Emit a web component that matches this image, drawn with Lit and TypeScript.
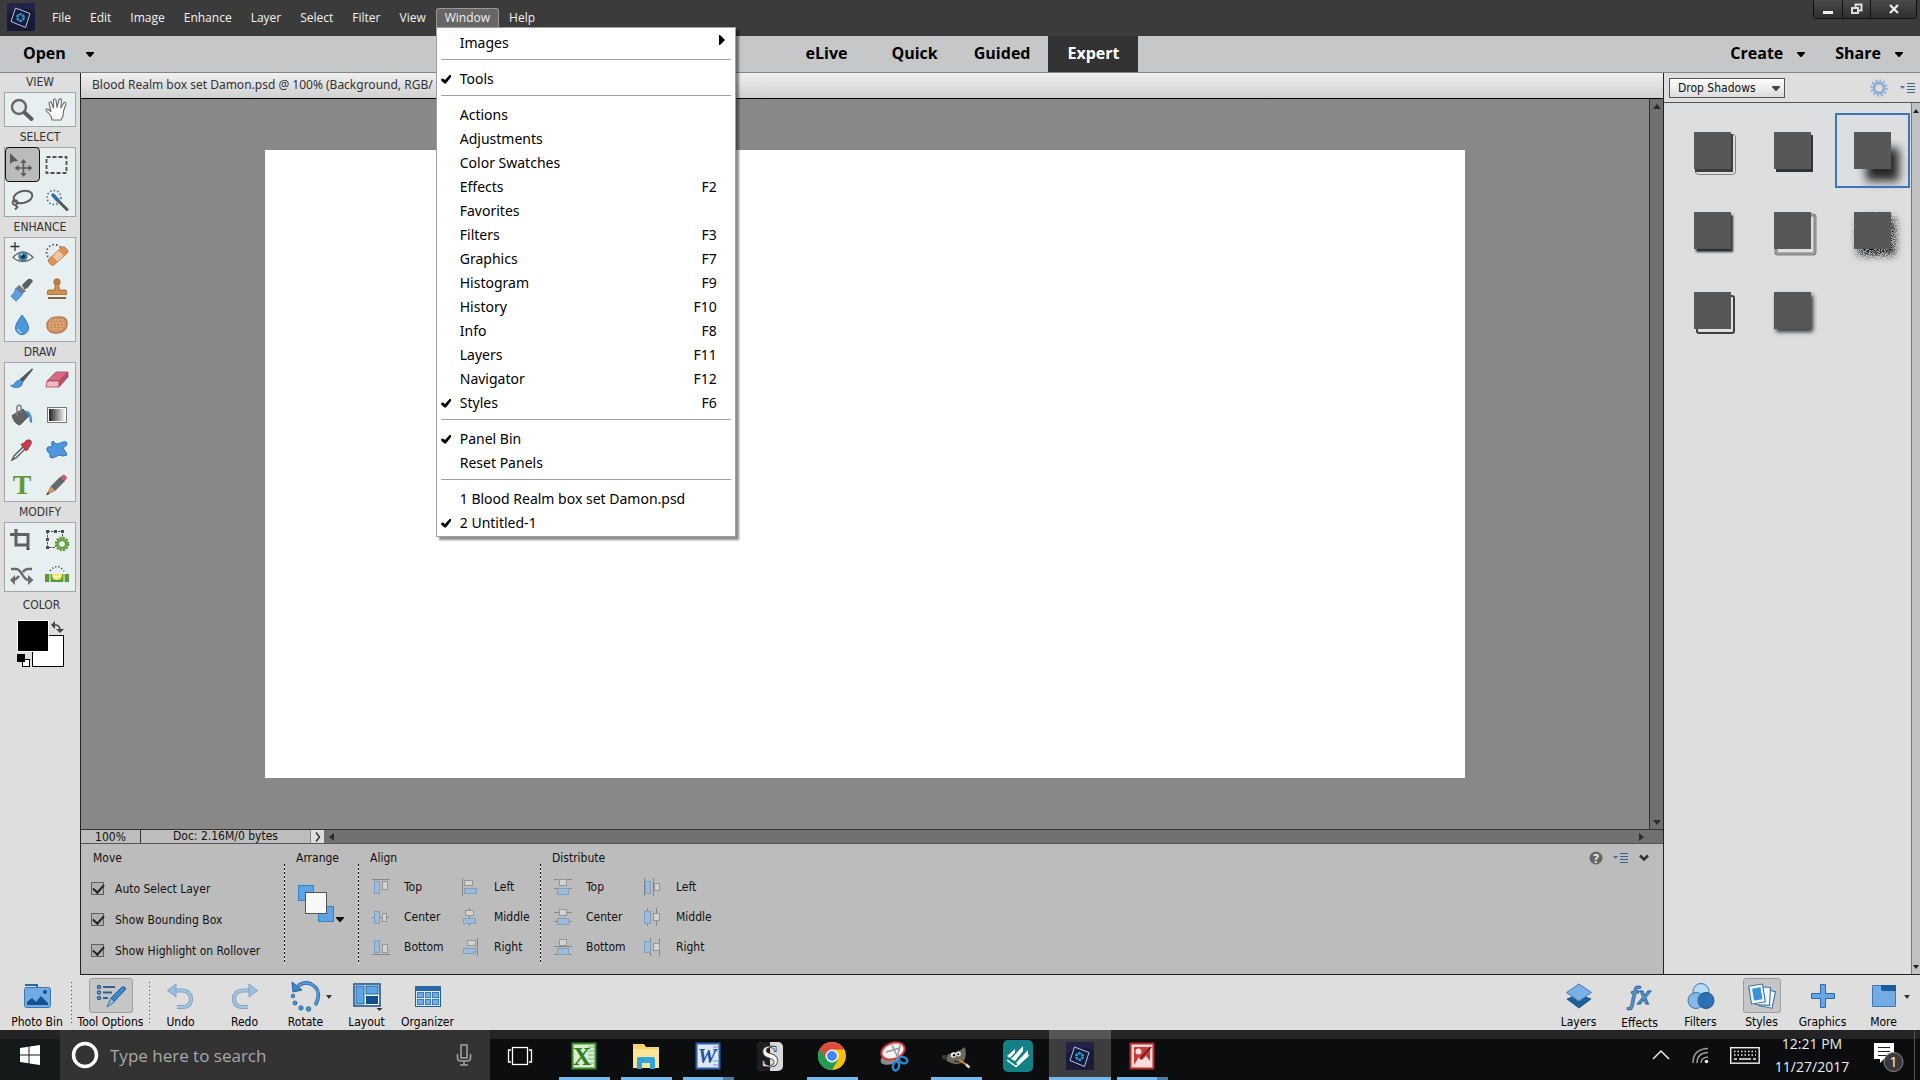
import { LitElement, html, css, svg, nothing, TemplateResult } from "lit";
import { customElement } from "lit/decorators.js";
import { classMap } from "lit/directives/class-map.js";

const icon = (w: number, h: number, body: unknown) =>
  html`<svg class="ico" width=${w} height=${h} viewBox="0 0 ${w} ${h}" aria-hidden="true">${body}</svg>`;

const caret = html`<svg class="ico" width="8" height="5" viewBox="0 0 8 5" aria-hidden="true"><path d="M0 0H8V1L4.500 5H3.500L0 1Z" fill="currentColor" /></svg>`;

const panelMenuIcon = icon(16, 12, svg`
  <path d="M0 4H5L2.500 7Z" fill="#4273a8"/>
  <path d="M7 1.500H15M7 4.500H15M7 7.500H15M7 10.500H15" stroke="#3f628c" stroke-width="1"/>`);

const check = html`<svg class="ico" width="10" height="9" viewBox="0 0 10 9" aria-hidden="true"><path d="M0 4L2 3.500L4 5L8.500 0H10V2L5 8.500H3.500L0.500 6Z" fill="#000" /></svg>`;

/* Application emblem: tilted frame with an aperture ring */
const emblem = (s: number) => html`<svg class="ico" width=${s} height=${s} viewBox="0 0 28 28" aria-hidden="true">
  <rect width="28" height="28" fill="#191a38" />
  <path d="M0 0H28V8Q14 2 0 12Z" fill="#22234a" />
  <path d="M8.500 5L23 10.500L18.500 24.500L4 18.500Z" fill="none" stroke="#a9cfe0" stroke-width="1" />
  <circle cx="13.500" cy="14.500" r="3.200" fill="none" stroke="#2d9fd8" stroke-width="2.400" stroke-dasharray="2.500 0.850" />
</svg>`;

/* ---------- Toolbox ---------- */
const tools: Record<string, TemplateResult> = {
  zoom: icon(26, 26, svg`<circle cx="10" cy="10" r="7" fill="#e3e8ea" stroke="#666a6c" stroke-width="2.500"/><path d="M15.500 15.500L22.500 22" stroke="#5a5d60" stroke-width="4" stroke-linecap="round"/>`),
  hand: icon(26, 26, svg`<path d="M8 23L7 19L2.500 14Q1.500 12 3.500 12L7 14.500L5 6.500Q5 4.500 7 5L9.500 11L9.500 3Q10.500 1 12 3L13 10.500L15 2.500Q17 1 17.500 3L16.800 11L20 5.500Q22 5 22 7L19.500 14L19 19L17 23Z" fill="#fafafa" stroke="#6b6b6b" stroke-width="1.100" stroke-linejoin="round"/>`),
  move: icon(26, 26, svg`<path d="M1 1V12L4 9.500L9 9Z" fill="#5a5a5a"/><g stroke="#5a5a5a" stroke-width="1.600" fill="#5a5a5a"><path d="M14.500 9.500V22.500M8 16H21"/><path stroke="none" d="M14.500 7L17.500 11H11.500ZM14.500 25L17.500 21H11.500ZM5.500 16L9.500 13V19ZM23.500 16L19.500 13V19Z"/></g>`),
  marquee: icon(26, 26, svg`<rect x="2.500" y="5" width="20" height="16" fill="none" stroke="#505050" stroke-width="1.800" stroke-dasharray="4 2"/>`),
  lasso: icon(26, 26, svg`<ellipse cx="14" cy="10" rx="9.500" ry="6" transform="rotate(-14 14 10)" fill="none" stroke="#5c5f61" stroke-width="2"/><circle cx="6" cy="15.500" r="2.300" fill="none" stroke="#5c5f61" stroke-width="1.800"/><path d="M6 18L8.500 20L6 22.500" fill="none" stroke="#5c5f61" stroke-width="1.800"/>`),
  quick: icon(26, 26, svg`<circle cx="10" cy="10.500" r="7" fill="none" stroke="#666" stroke-width="1.600" stroke-dasharray="1.500 2.100"/><path d="M12 11.500L23 22.500" stroke="#55585a" stroke-width="3" stroke-linecap="round"/><path d="M9 8L14 13.500" stroke="#2c6fad" stroke-width="3.500" stroke-linecap="round"/>`),
  eye: icon(26, 26, svg`<path d="M6 0V9M1.500 4.500H10.500" stroke="#333" stroke-width="1.300"/><path d="M4 15.500Q14 4.500 24 15.500Q14 23.500 4 15.500Z" fill="#fff" stroke="#6e7173" stroke-width="1.500"/><circle cx="14" cy="14.500" r="4.800" fill="#3e83a8"/><circle cx="14" cy="14.500" r="2.200" fill="#12303f"/><circle cx="12.500" cy="12.500" r="1" fill="#fff"/>`),
  heal: icon(26, 26, svg`<path d="M4 15A7 7 0 1 1 17 6" fill="none" stroke="#555" stroke-width="1.800" stroke-dasharray="1.500 2.200"/><g transform="rotate(-42 14 14)"><rect x="3" y="10" width="22" height="8" rx="2.500" fill="#dc9455" stroke="#b8743a" stroke-width="0.800"/><rect x="10" y="10.400" width="8" height="7.200" fill="#f3d3ad"/><path d="M12 12.500H13M15 12.500H16M12 15.500H13M15 15.500H16" stroke="#a8662f"/></g>`),
  smart: icon(26, 26, svg`<path d="M13 8L18 3Q20 1 22 2L24 4Q21 8 18.500 11L15.500 12.500Z" fill="#5b5e60"/><path d="M10 8L17 14L13 17L7 11Z" fill="#777b7e"/><path d="M7 11L13.500 17Q10 22 7 24Q4 22 2 19Q6 16 7 11Z" fill="#5b9fe0" stroke="#3277bb" stroke-width="0.800"/>`),
  stamp: icon(26, 26, svg`<circle cx="13" cy="5" r="3.200" fill="#bf8142" stroke="#99602c" stroke-width="0.800"/><path d="M11.500 7H14.500L15.500 13H21.500Q22.500 13 22.500 14.500V17.500H3.500V14.500Q3.500 13 4.500 13H10.500Z" fill="#cf9150" stroke="#99602c" stroke-width="0.800"/><path d="M4 21H22" stroke="#7d512a" stroke-width="1.800"/>`),
  blur: icon(26, 26, svg`<path d="M13 3Q19.500 11.500 19.500 16A6.500 6.500 0 0 1 6.500 16Q6.500 11.500 13 3Z" fill="#4f97dc" stroke="#3178be"/><path d="M9 17A4 4 0 0 0 13 20.500" stroke="#a7d0f5" fill="none" stroke-width="1.500"/>`),
  sponge: icon(26, 26, svg`<path d="M3 11Q5 5 13 5Q22 4 23 9Q24 16 20 19Q14 23 6 20Q2 17 3 11Z" fill="#cf9160" stroke="#ab6f43"/><path d="M5 11H22M5 14H22M6 17H20M7 8H20" stroke="#f2cfa6" stroke-width="1.200" stroke-dasharray="1.500 2"/>`),
  brush: icon(26, 26, svg`<path d="M23.500 2L14 14L11.500 12.500Z" fill="#55585a" stroke="#55585a" stroke-width="1.500"/><path d="M13.500 14.500Q14 20 8 20.500Q4 21 1.500 18.500Q5 18.500 6 16Q8 12 13.500 14.500Z" fill="#4f97dc" stroke="#3073b5" stroke-width="0.800"/>`),
  eraser: icon(26, 26, svg`<path d="M3 14L12 5H24L15 14Z" fill="#d56b82" stroke="#a5465c" stroke-width="0.800"/><path d="M24 5V10L15 20V14Z" fill="#b94f68" stroke="#a5465c" stroke-width="0.800"/><path d="M3 14H15V20H2Z" fill="#f4b6c2" stroke="#a5465c" stroke-width="0.800"/>`),
  bucket: icon(26, 26, svg`<path d="M3 13.500L14 7L20 14L11 23Q5 22 3 13.500Z" fill="#5f6365" stroke="#4b4e50" stroke-width="0.800"/><path d="M8 14V5Q9 2 12 4V11" fill="none" stroke="#7c7f81" stroke-width="1.500"/><path d="M15 9Q20 8 22 13Q24 19 22.500 21Q20 21 20.500 15Q19 12 15 9Z" fill="#4b8fd0"/>`),
  gradient: icon(26, 26, svg`<defs><linearGradient id="tool-gradient"><stop offset="0" stop-color="#222"/><stop offset="1" stop-color="#f6f6f6"/></linearGradient></defs><rect x="3.500" y="5.500" width="19" height="15" fill="#fff" stroke="#777"/><rect x="5" y="7" width="16" height="12" fill="url(#tool-gradient)"/>`),
  dropper: icon(26, 26, svg`<path d="M14.500 9.500L5 19L3 23L7 21L16.500 11.500" fill="#f1f3f3" stroke="#55585a" stroke-width="1.400"/><path d="M12 7.500L15 6Q18 1.500 21 3Q24 5 20.500 9.500L18.500 13L16.500 13.500Z" fill="#c43b50" stroke="#8f2637" stroke-width="0.800"/>`),
  shape: icon(26, 26, svg`<path d="M9 4Q12 8 14 7Q22 3 23 6Q24 8 19 11Q22 15 23 18Q19 20 15 18Q12 20 8 21Q5 21 6 17Q2 14 3 11Q4 9 8 10Q7 5 9 4Z" fill="#4f97dc" stroke="#3273b4"/>`),
  type: icon(30, 34, svg`<text x="15" y="26" text-anchor="middle" font-family="Liberation Serif, serif" font-weight="700" font-size="28" fill="#5f9a35">T</text>`),
  pencil: icon(26, 26, svg`<path d="M7 14.500L16.500 5L20.500 9L11 18.500Z" fill="#66696b" stroke="#4d4f51" stroke-width="0.800"/><path d="M7 14.500L11 18.500L2.500 23Z" fill="#d99a63" stroke="#9a6434" stroke-width="0.600"/><path d="M2.500 23L4 20L5.500 21.500Z" fill="#333"/><path d="M16.500 5L18.500 3Q20 2 22 4Q23.500 6 22.500 7L20.500 9Z" fill="#d3566c"/>`),
  crop: icon(26, 26, svg`<path d="M7 2V18H18M1 7.500H19V21" fill="none" stroke="#5f6264" stroke-width="3"/><rect x="17.500" y="21" width="3" height="2" fill="#444"/>`),
  recompose: icon(26, 26, svg`<path d="M3.500 4.500H18.500V10M3.500 4.500V20.500H11" fill="none" stroke="#4c4f51" stroke-dasharray="2.500 1"/><g fill="#4c4f51"><rect x="2" y="3" width="3" height="3"/><rect x="10" y="3" width="3" height="3"/><rect x="17" y="3" width="3" height="3"/><rect x="2" y="11" width="3" height="3"/><rect x="2" y="19" width="3" height="3"/></g><circle cx="18" cy="17" r="6.200" fill="none" stroke="#55852e" stroke-width="2" stroke-dasharray="2 1.250"/><circle cx="18" cy="17" r="4.300" fill="none" stroke="#6fa544" stroke-width="3"/>`),
  contentMove: icon(26, 26, svg`<path d="M2 7H7Q10 7 13 12Q16 18 20 18M2 18Q7 18 10 14M14 10Q16 7 19 7H23" fill="none" stroke="#6a6d6f" stroke-width="2.500"/><path d="M6 13V23L1 18ZM19 13V23L24.500 18Z" fill="#6a6d6f"/>`),
  straighten: icon(26, 26, svg`<path d="M6 9Q13 0 20 9" fill="none" stroke="#333" stroke-width="1.300" stroke-dasharray="1.300 2"/><rect x="1" y="12" width="24" height="8" fill="#5d983a"/><path d="M6 12V20M20 12V20" stroke="#fff"/><path d="M8 12H18V14Q18 18 13 18Q8 18 8 14Z" fill="#f4e46a"/><path d="M10 14Q13 16 16 14" stroke="#fff" fill="none" stroke-width="1.500"/>`),
};

const toolSections: { label: string; items: [string, string][] }[] = [
  { label: "VIEW", items: [["zoom", "Zoom"], ["hand", "Hand"]] },
  { label: "SELECT", items: [["move", "Move"], ["marquee", "Rectangular Marquee"], ["lasso", "Lasso"], ["quick", "Quick Selection"]] },
  { label: "ENHANCE", items: [["eye", "Red Eye Removal"], ["heal", "Spot Healing Brush"], ["smart", "Smart Brush"], ["stamp", "Clone Stamp"], ["blur", "Blur"], ["sponge", "Sponge"]] },
  { label: "DRAW", items: [["brush", "Brush"], ["eraser", "Eraser"], ["bucket", "Paint Bucket"], ["gradient", "Gradient"], ["dropper", "Color Picker"], ["shape", "Custom Shape"], ["type", "Type"], ["pencil", "Pencil"]] },
  { label: "MODIFY", items: [["crop", "Crop"], ["recompose", "Recompose"], ["contentMove", "Content-Aware Move"], ["straighten", "Straighten"]] },
];

/* ---------- Window menu ---------- */
type MenuEntry = { label: string; key?: string; on?: boolean; sub?: boolean } | null;
const windowMenu: MenuEntry[] = [
  { label: "Images", sub: true },
  null,
  { label: "Tools", on: true },
  null,
  { label: "Actions" },
  { label: "Adjustments" },
  { label: "Color Swatches" },
  { label: "Effects", key: "F2" },
  { label: "Favorites" },
  { label: "Filters", key: "F3" },
  { label: "Graphics", key: "F7" },
  { label: "Histogram", key: "F9" },
  { label: "History", key: "F10" },
  { label: "Info", key: "F8" },
  { label: "Layers", key: "F11" },
  { label: "Navigator", key: "F12" },
  { label: "Styles", key: "F6", on: true },
  null,
  { label: "Panel Bin", on: true },
  { label: "Reset Panels" },
  null,
  { label: "1 Blood Realm box set Damon.psd" },
  { label: "2 Untitled-1", on: true },
];

/* ---------- Align / distribute ---------- */
const G = "#868686";
const bigBox = (x: number, y: number, w: number, h: number) => svg`<rect x=${x + 0.5} y=${y + 0.5} width=${w - 1} height=${h - 1} fill="#9dbcd9" stroke="#7d9fc0"/>`;
const smallBox = (x: number, y: number, w: number, h: number) => svg`<rect x=${x + 0.5} y=${y + 0.5} width=${w - 1} height=${h - 1} fill="#d2d2d2" stroke="#969696"/>`;
const guide = (d: string) => svg`<path d=${d} stroke=${G} fill="none"/>`;
const s18 = (b: unknown) => icon(18, 18, b);

const alignItems: [string, TemplateResult][] = [
  ["Top", s18([guide("M0 1.500H18"), bigBox(2, 3, 6, 13), smallBox(10, 3, 6, 9)])],
  ["Left", s18([guide("M0.500 0V18"), smallBox(2, 2, 9, 6), bigBox(2, 10, 13, 6)])],
  ["Center", s18([guide("M0 9.500H17"), bigBox(2, 3, 6, 13), smallBox(10, 5, 5, 9)])],
  ["Middle", s18([guide("M7.500 0V18"), smallBox(3, 2, 9, 6), bigBox(1, 10, 13, 6)])],
  ["Bottom", s18([guide("M0 16.500H18"), bigBox(2, 2, 6, 13), smallBox(10, 6, 6, 9)])],
  ["Right", s18([guide("M15.500 0V18"), smallBox(5, 2, 9, 6), bigBox(1, 10, 13, 6)])],
];
const distItems: [string, TemplateResult][] = [
  ["Top", s18([guide("M0 1.500H18M0 10.500H18"), smallBox(5, 1, 8, 7), bigBox(3, 10, 12, 7)])],
  ["Left", s18([guide("M0.500 0V18M9.500 0V18"), bigBox(1, 3, 6, 13), smallBox(10, 5, 6, 8)])],
  ["Center", s18([guide("M0 4.500H18M0 13.500H18"), smallBox(5, 1, 8, 7), bigBox(3, 10, 12, 7)])],
  ["Middle", s18([guide("M3.500 0V18M12.500 0V18"), bigBox(0, 3, 7, 13), smallBox(9, 5, 7, 8)])],
  ["Bottom", s18([guide("M0 8.500H18M0 16.500H18"), smallBox(5, 1, 8, 7), bigBox(3, 10, 12, 7)])],
  ["Right", s18([guide("M6.500 0V18M15.500 0V18"), bigBox(0, 3, 7, 12), smallBox(9, 5, 7, 8)])],
];

/* ---------- Bottom bar ---------- */
type Action = { label: string; art: TemplateResult; on?: boolean; wide?: boolean; caret?: boolean; gap?: boolean; sep?: boolean };
const leftActions: Action[] = [
  { label: "Photo Bin", wide: true, sep: true, art: icon(32, 28, svg`<path d="M4 3H16V6" fill="none" stroke="#2f68a0" stroke-width="2"/><rect x="3.500" y="5.500" width="26" height="20" rx="2" fill="#6fabe6" stroke="#3b77b0"/><path d="M6 23V20L11 16L15 20L20 14L27 21V23Z" fill="#194f8e"/><circle cx="24" cy="10" r="2" fill="#194f8e"/>`) },
  { label: "Tool Options", wide: true, on: true, sep: true, art: icon(32, 28, svg`<g fill="none" stroke="#2e6296" stroke-width="1.500"><circle cx="4" cy="5" r="1.500"/><circle cx="4" cy="10.500" r="1.500"/><circle cx="4" cy="16" r="1.500"/><path d="M8 5H20M8 10.500H17M8 16H13" stroke-width="1.800"/></g><path d="M16 16L27 5Q29 4 30.500 6Q31 7 30 8L19 19.500Z" fill="#3d87cb" stroke="#1d5a95"/><path d="M16 16L19.500 20L12 25Z" fill="#8dbfee" stroke="#1d5a95" stroke-width="0.800"/>`) },
  { label: "Undo", gap: true, art: icon(30, 28, svg`<path d="M8 8.500H16Q25 9 25 17Q25 25 16 25H11" fill="none" stroke="#7ea3c4" stroke-width="4"/><path d="M8 8.500H16Q25 9 25 17Q25 25 16 25H11" fill="none" stroke="#a8c6e2" stroke-width="2"/><path d="M1.500 8.500L10 2V15Z" fill="#9dbfdf" stroke="#7ea3c4"/>`) },
  { label: "Redo", art: icon(30, 28, svg`<path d="M20 8.500H13Q4 9 4 17Q4 25 13 25H18" fill="none" stroke="#7ea3c4" stroke-width="4"/><path d="M20 8.500H13Q4 9 4 17Q4 25 13 25H18" fill="none" stroke="#a8c6e2" stroke-width="2"/><path d="M27.500 8.500L19 2V15Z" fill="#9dbfdf" stroke="#7ea3c4"/>`) },
  { label: "Rotate", caret: true, art: icon(32, 32, svg`<path d="M8 6Q14 1 21 4Q30 9 28 18Q27 23 25 25" fill="none" stroke="#2f6aa6" stroke-width="3.600"/><path d="M8 6Q14 1 21 4Q30 9 28 18Q27 23 25 25" fill="none" stroke="#5b9edd" stroke-width="1.800"/><path d="M2 2L3 12L12 10Z" fill="#3f85c9" stroke="#205e9c"/><g fill="#4b91d4" stroke="#205e9c" stroke-width="0.800"><circle cx="3" cy="16" r="1.800"/><circle cx="5" cy="23" r="2"/><circle cx="11" cy="28" r="2.200"/><circle cx="18.500" cy="29" r="2.300"/></g>`) },
  { label: "Layout", art: icon(30, 28, svg`<rect x="2" y="2" width="26" height="22" fill="#f3f7fb" stroke="#164d86" stroke-width="1.500"/><rect x="4" y="4" width="8" height="18" fill="#5ea3e2" stroke="#2a66a2"/><rect x="14" y="4" width="12" height="8" fill="#5ea3e2" stroke="#2a66a2"/><rect x="14" y="14" width="12" height="8" fill="#124f90"/><path d="M24.500 26H30.500L27.500 29Z" fill="#333"/>`) },
  { label: "Organizer", art: icon(30, 28, svg`<rect x="2.500" y="4.500" width="25" height="20" fill="#dcebf8" stroke="#1f5d98"/><rect x="2" y="4" width="26" height="5" fill="#2767a5"/><g fill="#74b0e8" stroke="#3d79b4"><rect x="4.500" y="10.500" width="6" height="5"/><rect x="12.500" y="10.500" width="5" height="5"/><rect x="19.500" y="10.500" width="6" height="5"/><rect x="4.500" y="17.500" width="6" height="5"/><rect x="12.500" y="17.500" width="5" height="5"/><rect x="19.500" y="17.500" width="6" height="5"/></g>`) },
];
const rightActions: Action[] = [
  { label: "Layers", art: icon(30, 28, svg`<path d="M3 17L15 26L27 17L22 15L15 20L8 15Z" fill="#1d609f" stroke="#124878" stroke-width="0.800"/><path d="M15 2L27.500 10.500L15 19L2.500 10.500Z" fill="#7bb0e8" stroke="#3a78b5"/>`) },
  { label: "Effects", art: icon(34, 34, svg`<text x="17" y="25" text-anchor="middle" font-family="Open Sans, Noto Sans, sans-serif" font-style="italic" font-weight="600" font-size="24" fill="#5a97d0" stroke="#245f99" stroke-width="0.800">fx</text>`) },
  { label: "Filters", art: icon(30, 28, svg`<circle cx="15" cy="9.500" r="8" fill="#b7daf7" stroke="#3a78b5"/><circle cx="10" cy="18.500" r="8" fill="#7fb4e8" fill-opacity="0.900" stroke="#3a78b5"/><circle cx="20" cy="18.500" r="8" fill="#1c65ad" fill-opacity="0.900" stroke="#1c5590"/><path d="M15 12.500Q18 15 18 18.500Q18 22 15 24.500Q12 22 12 18.500Q12 15 15 12.500Z" fill="#2e6fb0"/>`) },
  { label: "Styles", on: true, art: icon(32, 28, svg`<g stroke="#2a6aa3" fill="#f0f6fb"><rect x="15" y="8" width="13" height="17" transform="rotate(12 21 16)"/><rect x="10" y="5" width="14" height="18" transform="rotate(3 17 14)"/><rect x="4" y="3" width="14" height="18" transform="rotate(-9 11 12)"/></g><rect x="7" y="6" width="8.500" height="12" fill="#3793d8" transform="rotate(-9 11 12)"/>`) },
  { label: "Graphics", art: icon(30, 28, svg`<path d="M12.500 2.500H17.500V11.500H26.500V16.500H17.500V25.500H12.500V16.500H3.500V11.500H12.500Z" fill="#66a6e3" stroke="#2a6aa8"/>`) },
  { label: "More", caret: true, art: icon(30, 28, svg`<path d="M3.500 3.500H26.500V24.500H3.500Z" fill="#74abe5" stroke="#3c79b4"/><path d="M12 3H27V9H14Q12 9 12 7Z" fill="#1b5c9d"/>`) },
];

/* ---------- Drop shadow presets ---------- */
const sq = svg`<rect x="19" y="19" width="37" height="37" fill="#575757"/>`;
const blur = (id: string, dev: number) => svg`<defs><filter id=${id} x="-50%" y="-50%" width="200%" height="200%"><feGaussianBlur stdDeviation=${dev}/></filter></defs>`;
const preset = (b: unknown) => html`<svg class="ico" width="75" height="75" viewBox="0 0 75 75" aria-hidden="true">${b}</svg>`;
const presets: [string, TemplateResult][] = [
  ["High with outline", preset(svg`<rect x="20.500" y="21.500" width="40" height="40" rx="3" fill="#dedede" stroke="#818181"/><rect x="20" y="21" width="38" height="38" fill="#3d3d3d"/>${sq}`)],
  ["Hard edge", preset(svg`<rect x="21" y="22" width="37" height="37" fill="#333"/>${sq}`)],
  ["High", preset(svg`${blur("soft5", 5)}<rect x="31" y="35" width="33" height="33" fill="#000" fill-opacity="0.820" filter="url(#soft5)"/>${sq}`)],
  ["Low", preset(svg`${blur("soft1", 1)}<rect x="21" y="22" width="37" height="37" fill="#2c2c2c" filter="url(#soft1)"/>${sq}`)],
  ["Gray outline", preset(svg`<rect x="21" y="22" width="39" height="39" rx="2" fill="#dedede" stroke="#7d7d7d" stroke-width="3"/><rect x="21" y="22" width="39" height="39" rx="2" fill="none" stroke="#a8a8a8" stroke-width="1"/>${sq}`)],
  ["Noisy", preset(svg`<defs><filter id="speckle" x="-50%" y="-50%" width="200%" height="200%">
      <feGaussianBlur in="SourceGraphic" stdDeviation="4" result="s"/>
      <feTurbulence type="fractalNoise" baseFrequency="0.900" numOctaves="2"/>
      <feColorMatrix values="0 0 0 0 0.100  0 0 0 0 0.100  0 0 0 0 0.100  7 0 0 0 -3" result="t"/>
      <feComposite in="s" in2="t" operator="arithmetic" k1="0.750" k2="0.350" k3="0" k4="0"/></filter></defs>
      <rect x="23" y="25" width="37" height="37" fill="#111" filter="url(#speckle)"/>${sq}`)],
  ["Dark outline", preset(svg`<rect x="22" y="23" width="37" height="37" rx="2" fill="#dedede" stroke="#3f3f3f" stroke-width="2"/>${sq}`)],
  ["Soft edge", preset(svg`${blur("soft2", 2)}<rect x="21" y="22" width="37" height="37" fill="#333" filter="url(#soft2)"/>${sq}`)],
];

/* ---------- Taskbar ---------- */
const s32 = (b: unknown) => icon(32, 32, b);
type Task = { name: string; art: TemplateResult; open?: boolean; multi?: boolean; active?: boolean };
const tasks: Task[] = [
  { name: "Excel", open: true, art: s32(svg`<rect x="4.500" y="3.500" width="23" height="25" fill="#d8edd0" stroke="#3c8a2b" stroke-width="2"/><path d="M20 7H26M20 11H26M20 15H26M20 19H26M20 23H26" stroke="#7db36e"/><text x="14" y="25" text-anchor="middle" font-family="Liberation Serif, serif" font-weight="700" font-size="25" fill="#2f7d20">X</text>`) },
  { name: "File Explorer", open: true, art: s32(svg`<path d="M3 4H14L16 7H29V28H3Z" fill="#f6d36b"/><path d="M3 9H29V28H3Z" fill="#fde597"/><path d="M7 29V19Q7 17 9 17H23Q25 17 25 19V29H20V23H12V29Z" fill="#2fa5dc"/>`) },
  { name: "Word", open: true, multi: true, art: s32(svg`<rect x="4.500" y="3.500" width="23" height="25" fill="#dce9f9" stroke="#2d5fae" stroke-width="2"/><path d="M21 7H26M21 11H26M21 21H26M21 25H26" stroke="#6c93cf"/><text x="15" y="23" text-anchor="middle" font-family="Liberation Serif, serif" font-style="italic" font-weight="700" font-size="21" fill="#244f9e">W</text>`) },
  { name: "Scrivener", art: s32(svg`<rect x="3" y="2" width="26" height="29" rx="5" fill="#d9d9d9"/><path d="M8 2H16V31H8Q3 31 3 26V7Q3 2 8 2Z" fill="#1d1d1d"/><text x="16" y="27" text-anchor="middle" font-family="Liberation Serif, serif" font-weight="700" font-size="32" fill="#fafafa" stroke="#333" stroke-width="0.800">S</text>`) },
  { name: "Chrome", open: true, art: s32(svg`<circle cx="16" cy="16" r="14" fill="#f4c20d"/><path d="M16 16L3.900 9A14 14 0 0 0 16 30L22 20Z" fill="#1f9d58"/><path d="M3.900 9A14 14 0 0 1 28.100 9.500H16L10 19Z" fill="#de4a3c"/><circle cx="16" cy="16" r="6.500" fill="#fff"/><circle cx="16" cy="16" r="5" fill="#4385f3"/>`) },
  { name: "Snipping Tool", art: s32(svg`<ellipse cx="13" cy="18" rx="11" ry="6" transform="rotate(-20 13 18)" fill="#8d8d8d"/><ellipse cx="15" cy="11" rx="12" ry="8" transform="rotate(-20 15 11)" fill="#f4f4f4" stroke="#d53a3a" stroke-width="2"/><path d="M8 12L22 8M14 5L21 20M22 5L19 20" stroke="#999" stroke-width="1.500"/><ellipse cx="25" cy="20" rx="4.500" ry="3" transform="rotate(25 25 20)" fill="none" stroke="#2b8ad0" stroke-width="2.400"/><ellipse cx="18" cy="26" rx="3" ry="4.500" transform="rotate(15 18 26)" fill="none" stroke="#2b8ad0" stroke-width="2.400"/>`) },
  { name: "GIMP", open: true, art: s32(svg`<path d="M8 14Q13 14 16 12Q21 10 25 7Q27 15 24 21Q19 26 11 23Q8 22 6 20Z" fill="#6f695c"/><ellipse cx="4.500" cy="17" rx="2.800" ry="2.300" fill="#3a3a3a"/><circle cx="13.500" cy="15" r="2.800" fill="#eee"/><circle cx="18.500" cy="14" r="2.400" fill="#eee"/><circle cx="14" cy="15.300" r="1.200"/><circle cx="18.300" cy="14.300" r="1"/><path d="M14 21Q18 22.500 21 21" stroke="#222" fill="none"/><path d="M19 20L27 25" stroke="#d9852d" stroke-width="2"/><path d="M26 24.500L29.500 27.500" stroke="#ddd" stroke-width="2.400"/>`) },
  { name: "Prowriter", art: s32(svg`<rect x="1" y="0" width="30" height="32" rx="5" fill="#128084"/><path d="M5 16L13 9V12.500L8 18ZM9 19L21 6V11L13 21ZM14 23L26 10V15L17 25Z" fill="#fff"/><path d="M5 20L14 26.500L27 15" fill="none" stroke="#fff" stroke-width="1.500"/>`) },
  { name: "Photoshop Elements", open: true, active: true, art: emblem(28) },
  { name: "Picture Manager", open: true, multi: true, art: s32(svg`<rect x="4.500" y="3.500" width="23" height="25" fill="#f5d9d7" stroke="#b52b2b" stroke-width="2"/><rect x="8" y="7" width="16" height="18" fill="#c63b3b"/><circle cx="12.500" cy="11.500" r="3" fill="#f8dedd"/><path d="M8 25L13 17L16 20L20 16L24 21V25Z" fill="#f8dedd"/><path d="M14 19L25 7" stroke="#7d1414" stroke-width="1.800"/>`) },
];

@customElement("app-root")
export class AppRoot extends LitElement {
  static styles = css`
    :host {
      display: flex;
      flex-direction: column;
      min-height: 100vh;
      background: #dedede;
      color: #111;
      font: 12px/16px "DejaVu Sans Condensed", "Open Sans", "Noto Sans", sans-serif;
    }
    * { box-sizing: border-box; }
    button, input, select { font: inherit; color: inherit; margin: 0; padding: 0; border: 0; background: none; }
    button { cursor: default; white-space: nowrap; }
    h2, h3 { margin: 0; font: inherit; }
    .ico { display: block; flex: none; overflow: visible; }

    /* title bar */
    .title { display: flex; align-items: flex-start; height: 36px; background: #3b3b3b; color: #f2f2f2; font: 12px/18px "Open Sans", "Noto Sans", sans-serif; }
    .logo { padding: 3px 8px 0 7px; }
    .menubar { display: flex; gap: 1px; padding-top: 8px; flex: 1; }
    .menuitem { position: relative; }
    .menuitem > button { display: block; height: 20px; padding: 0 8px; border: 1px solid transparent; border-radius: 3px 3px 0 0; line-height: 18px; }
    .menuitem > .open { background: #666; border-color: #999; border-bottom: 0; padding: 0 8px 1px; }
    .controls { display: flex; margin-right: 3px; border: 1px solid #111; border-top: 0; border-radius: 0 0 3px 3px; }
    .controls button { display: grid; place-items: center; width: 28px; height: 18px; background: linear-gradient(#4b4b4b, #3c3c3c 50%, #2e2e2e); border-left: 1px solid #111; }
    .controls button:first-child { border-left: 0; }
    .controls .close { width: 46px; }

    .popup { position: absolute; z-index: 5; top: 19px; left: 0; width: 300px; padding: 3px 0 1px; background: #fff; border: 1px solid #a0a0a0; box-shadow: 3px 3px 2px rgba(0, 0, 0, 0.45); color: #000; font: 14px/24px "Noto Sans", "Open Sans", sans-serif; display: flex; flex-direction: column; }
    .entry { display: flex; align-items: center; height: 24px; padding-right: 18px; text-align: left; }
    .entry .mark { width: 23px; padding-left: 4px; }
    .entry .name { flex: 1; }
    .entry.sub { padding-right: 10px; }
    .entry.sub .ico { margin-bottom: 6px; }
    .rule { height: 12px; margin: 0 4px; border: 0; padding-top: 4px; }
    .rule::before { content: ""; display: block; height: 1px; background: #a0a0a0; }

    /* mode bar */
    .modes { display: grid; grid-template-columns: 1fr auto 1fr; align-items: stretch; height: 37px; background: #c5c7c9; border-bottom: 1px solid #858585; font: 700 16px/34px "Open Sans", "Noto Sans", sans-serif; color: #000; }
    .modes .tabs { display: flex; padding-left: 6px; }
    .tabs button { padding: 0 18px 2px; }
    .tabs button:first-child { padding-right: 26px; }
    .tabs .on { background: #333; color: #fff; padding: 0 19px 2px; }
    .drop { display: flex; align-items: center; padding-bottom: 2px; }
    .drop .ico { margin: 2px 0 0 14px; }
    .opener .ico { margin-left: 20px; }
    .opener { padding-left: 23px; }
    .right { display: flex; justify-content: flex-end; gap: 30px; padding-right: 17px; }

    /* body */
    .body { flex: 1; display: flex; min-height: 0; }
    .toolbox { width: 81px; border-right: 1px solid #222; background: #dedede; padding: 0 4px; color: #333; }
    .toolbox h2 { text-align: center; line-height: 20px; }
    .toolbox h2:first-child { line-height: 19px; }
    .toolgrid { display: grid; grid-template-columns: 35px 35px; grid-auto-rows: 35px; padding: 0 1px; box-shadow: inset 0 0 0 1px #a5a5a5; background: #e7eff0; }
    .toolgrid button { display: grid; place-items: center; border: 1px solid transparent; border-radius: 4px; }
    .toolgrid .ico { margin-right: 2px; }
    .toolgrid .on { border: 1px solid #111; background: #bbb; }
    .toolbox .color { padding: 3px 0 0 3px; }
    .swatch { display: block; margin: 5px 0 0 13px; }

    .work { flex: 1; display: flex; flex-direction: column; min-width: 0; }
    .doctab { height: 26px; padding-left: 11px; font: 12px/23px "Noto Sans", "Open Sans", sans-serif; background: linear-gradient(#f0f0f1, #d0d0d0); border-bottom: 1px solid #000; color: #333; white-space: nowrap; }
    .stage { flex: 1; display: flex; background: #888; }
    .view { flex: 1; display: grid; place-items: center; min-width: 0; }
    .paper { width: 1200px; max-width: 90%; aspect-ratio: 300 / 157; background: #fff; }
    .vbar { width: 14px; display: flex; flex-direction: column; align-items: center; justify-content: space-between; padding: 5px 0 4px; background: #707070; border-left: 1px solid #333; color: #2b2b2b; }
    .status { display: flex; height: 15px; border-top: 1px solid #333; border-bottom: 1px solid #555; background: #bdbdbd; line-height: 13px; color: #111; }
    .status .pct { width: 60px; border-right: 1px solid #333; text-align: center; line-height: 15px; }
    .status .size { width: 169px; text-align: center; }
    .status .more { display: grid; place-items: center; width: 14px; background: #dedede; border-left: 1px solid #888; }
    .hbar { flex: 1; display: flex; align-items: center; justify-content: space-between; padding: 0 19px 0 5px; background: #707070; color: #2b2b2b; }

    .options { display: flex; height: 131px; border-bottom: 1px solid #222; background: #bcbcbc; }
    .group { padding: 5px 0 0 11px; }
    .group h3 { line-height: 18px; }
    .group + .group { background: repeating-linear-gradient(#111 0 2px, #ececec 2px 4px) left 20px / 1px 100px no-repeat; padding-left: 12px; }
    .g-move { width: 203px; padding-left: 10px; }
    .g-move h3 { padding-left: 2px; }
    .g-arrange { width: 74px; }
    .g-align { width: 182px; }
    .checks { display: grid; grid-auto-rows: 31px; align-items: center; padding-top: 6px; }
    .checks label { display: flex; align-items: center; gap: 11px; }
    .checks input { appearance: none; display: grid; place-items: center; width: 13px; height: 13px; background: #b0b0b0; border: 1px solid #606060; }
    .checks input:checked::before { content: ""; width: 9px; height: 5px; margin: 0 0 3px 1px; border: solid #222; border-width: 0 0 2px 2px; transform: rotate(-48deg); }
    .arrange { display: flex; align-items: flex-end; gap: 2px; margin: 17px 0 0 2px; }
    .aligns { display: grid; grid-template-columns: 90px auto; grid-auto-rows: 30px; padding: 5px 0 0 2px; justify-content: start; }
    .aligns button { display: flex; align-items: center; gap: 14px; }
    .tools-right { display: flex; align-items: center; gap: 10px; margin-left: auto; height: 28px; padding-right: 14px; }

    .bin { width: 257px; display: flex; flex-direction: column; border-left: 1px solid #222; border-bottom: 1px solid #222; background: #dddee0; }
    .binhead { display: flex; align-items: center; gap: 12px; height: 30px; padding: 0 4px 0 5px; border-bottom: 1px solid #555; background: #dedede; }
    .pick { position: relative; margin-right: auto; }
    .pick select { appearance: none; display: block; width: 116px; height: 20px; padding-left: 8px; border: 1px solid #555; border-radius: 0; background: linear-gradient(#fdfdfd, #dcdcdc); color: #111; }
    .pick .ico { position: absolute; right: 5px; top: 8px; color: #444; pointer-events: none; }
    .binbody { flex: 1; display: flex; }
    .presets { flex: 1; display: grid; grid-template-columns: repeat(auto-fill, 75px); grid-auto-rows: 75px; gap: 5px; padding: 10px 0 0 11px; }
    .presets button { display: block; }
    .presets .on { outline: 2px solid #3d75b8; outline-offset: -2px; }
    .sbar { width: 9px; display: flex; flex-direction: column; align-items: center; justify-content: space-between; padding: 6px 0 5px; border-left: 1px solid #777; background: #c0c1c3; color: #222; }

    /* bottom bar */
    .actions { display: flex; height: 55px; background: #dedede; color: #000; padding: 3px 6px 0 0; }
    .act { position: relative; display: flex; flex-direction: column; align-items: center; gap: 1px; width: 61px; }
    .act .art { display: grid; place-items: center; width: 44px; height: 36px; border-radius: 3px; border: 1px solid transparent; }
    .act .art.small { width: 38px; }
    .act.on .art { background: #c6c6c6; border-color: #9c9c9c; }
    .act .ico.dd { position: absolute; right: 4px; top: 17px; color: #333; }
    .act.wide { width: 77px; }
    .act.first { width: 71px; padding-left: 3px; }
    .act.gap { margin-right: 3px; }
    .dots { width: 1px; height: 42px; margin-top: 4px; background: repeating-linear-gradient(#444 0 1px, transparent 1px 4px); }
    .spacer { flex: 1; }

    /* taskbar */
    .taskbar { display: flex; height: 50px; background: linear-gradient(#242424 9px, #0b0d0f 9px); color: #eee; font: 14px/18px "Open Sans", "Noto Sans", sans-serif; }
    .start { display: grid; place-items: center; width: 60px; background: linear-gradient(#242424 9px, #141a19 9px); }
    .search { display: flex; align-items: center; width: 430px; padding: 0 18px 0 12px; background: #333; color: #a9a9a9; }
    .search input { flex: 1; min-width: 0; height: 30px; margin-left: 10px; font-size: 17px; outline: 0; }
    .search input::placeholder { color: #a9a9a9; opacity: 1; }
    .task { display: grid; place-items: center; width: 62px; position: relative; padding-top: 1px; }
    .task.view-all { width: 63px; padding-right: 4px; }
    .task.active { background: linear-gradient(#555 9px, #3d3d3d 9px); }
    .task.open::after { content: ""; position: absolute; left: 6px; right: 5px; bottom: 0; height: 3px; background: #76b9ed; }
    .task.multi::after { background: linear-gradient(90deg, #76b9ed 40px, #4d7ca3 40px); }
    .task.active::after { left: 0; right: 0; }
    .tray { margin-left: auto; display: flex; align-items: center; }
    .tray > button { display: grid; place-items: center; }
    .clock { width: 92px; text-align: center; display: grid; gap: 5px; margin-left: 6px; }
    .notes { width: 56px; padding: 4px 0 0 6px; }
    .desk { width: 6px; align-self: stretch; border-left: 1px solid #555; }
  `;

  private renderEntry(e: MenuEntry) {
    if (!e) return html`<hr class="rule" />`;
    return html`<button class=${classMap({ entry: true, sub: !!e.sub })} role="menuitem">
      <span class="mark">${e.on ? check : nothing}</span><span class="name">${e.label}</span>
      ${e.key ? html`<span>${e.key}</span>` : nothing}
      ${e.sub ? icon(6, 10, svg`<path d="M0 0H1L6 5L1 10H0Z" fill="#000"/>`) : nothing}
    </button>`;
  }

  private renderTitle() {
    const names = ["File", "Edit", "Image", "Enhance", "Layer", "Select", "Filter", "View", "Window", "Help"];
    return html`<header class="title">
      <div class="logo">${emblem(28)}</div>
      <nav class="menubar">
        ${names.map((n) => html`<div class="menuitem">
          <button class=${n === "Window" ? "open" : ""}>${n}</button>
          ${n === "Window" ? html`<div class="popup" role="menu">${windowMenu.map((e) => this.renderEntry(e))}</div>` : nothing}
        </div>`)}
      </nav>
      <div class="controls">
        <button aria-label="Minimize">${icon(12, 12, svg`<rect x="1" y="8" width="10" height="3" fill="#eee"/>`)}</button>
        <button aria-label="Restore">${icon(12, 12, svg`<path d="M4.500 4V1.500H10.500V7.500H8" fill="none" stroke="#ddd" stroke-width="2"/><rect x="1" y="5" width="6" height="5" fill="none" stroke="#ddd" stroke-width="2"/>`)}</button>
        <button class="close" aria-label="Close">${icon(12, 12, svg`<path d="M2 2L10 10M10 2L2 10" stroke="#eee" stroke-width="2.200"/>`)}</button>
      </div>
    </header>`;
  }

  private renderModes() {
    return html`<div class="modes">
      <button class="drop opener">Open ${caret}</button>
      <div class="tabs">
        ${["eLive", "Quick", "Guided", "Expert"].map((t) => html`<button class=${t === "Expert" ? "on" : ""}>${t}</button>`)}
      </div>
      <div class="right"><button class="drop">Create ${caret}</button><button class="drop">Share ${caret}</button></div>
    </div>`;
  }

  private renderToolbox() {
    return html`<aside class="toolbox">
      ${toolSections.map((s) => html`<h2>${s.label}</h2>
        <div class="toolgrid">${s.items.map(([k, n]) => html`<button class=${k === "move" ? "on" : ""} aria-label=${n}>${tools[k]}</button>`)}</div>`)}
      <h2 class="color">COLOR</h2>
      <svg class="swatch" width="48" height="48" viewBox="0 0 48 48" role="img" aria-label="Foreground and background color">
        <rect x="15.500" y="15.500" width="31" height="31" fill="#fff" stroke="#000" />
        <rect x="0.500" y="0.500" width="31" height="31" fill="#000" stroke="#fff" />
        <path d="M38 5Q43 5 43 10" fill="none" stroke="#444" stroke-width="1.500" /><path d="M38 1V9L34 5ZM39 9H47L43 13Z" fill="#444" />
        <rect x="5.500" y="39.500" width="7" height="7" fill="#fff" stroke="#000" /><rect x="0" y="34" width="8" height="8" fill="#000" />
      </svg>
    </aside>`;
  }

  private renderAligns(items: [string, TemplateResult][]) {
    return html`<div class="aligns">${items.map(([n, art]) => html`<button>${art}<span>${n}</span></button>`)}</div>`;
  }

  private renderWork() {
    return html`<main class="work">
      <div class="doctab">Blood Realm box set Damon.psd @ 100% (Background, RGB/</div>
      <div class="stage">
        <div class="view"><div class="paper"></div></div>
        <div class="vbar">${icon(8, 5, svg`<path d="M0 5H8L4 0Z" fill="currentColor"/>`)}${icon(8, 5, svg`<path d="M0 0H8L4 5Z" fill="currentColor"/>`)}</div>
      </div>
      <div class="status">
        <span class="pct">100%</span><span class="size">Doc: 2.16M/0 bytes</span>
        <button class="more" aria-label="Status options">${icon(6, 10, svg`<path d="M1 0.500L4.500 5L1 9.500" fill="none" stroke="#333" stroke-width="1.500"/>`)}</button>
        <span class="hbar">${icon(5, 8, svg`<path d="M5 0V8L0 4Z" fill="currentColor"/>`)}${icon(5, 8, svg`<path d="M0 0V8L5 4Z" fill="currentColor"/>`)}</span>
      </div>
      <section class="options">
        <div class="group g-move"><h3>Move</h3>
          <div class="checks">${["Auto Select Layer", "Show Bounding Box", "Show Highlight on Rollover"].map((t) => html`<label><input type="checkbox" checked />${t}</label>`)}</div>
        </div>
        <div class="group g-arrange"><h3>Arrange</h3>
          <button class="arrange" aria-label="Arrange">${icon(36, 38, svg`<rect x="0.500" y="1.500" width="15" height="15" fill="#5da4e6" stroke="#3a7fc0"/><rect x="20.500" y="22.500" width="15" height="15" fill="#5da4e6" stroke="#3a7fc0"/><rect x="7.500" y="8.500" width="21" height="21" fill="#f8f8fa" stroke="#555"/>`)}${caret}</button>
        </div>
        <div class="group g-align"><h3>Align</h3>${this.renderAligns(alignItems)}</div>
        <div class="group"><h3>Distribute</h3>${this.renderAligns(distItems)}</div>
        <div class="tools-right">
          <button aria-label="Help">${icon(14, 14, svg`<circle cx="7" cy="7" r="6.500" fill="#666"/><text x="7" y="11.500" text-anchor="middle" font-family="Open Sans, sans-serif" font-weight="700" font-size="12" fill="#eee">?</text>`)}</button>
          <button aria-label="Panel menu">${panelMenuIcon}</button>
          <button aria-label="Collapse">${icon(10, 8, svg`<path d="M1 1.500L5 5.500L9 1.500" fill="none" stroke="#333" stroke-width="2.500"/>`)}</button>
        </div>
      </section>
    </main>`;
  }

  private renderBin() {
    return html`<aside class="bin">
      <div class="binhead">
        <div class="pick"><select aria-label="Style category"><option>Drop Shadows</option></select>${caret}</div>
        <button aria-label="Settings">${icon(18, 18, svg`<circle cx="9" cy="9" r="7.500" fill="none" stroke="#8fb0d2" stroke-width="2.500" stroke-dasharray="2 1.930"/><circle cx="9" cy="9" r="5" fill="none" stroke="#8fb0d2" stroke-width="3"/>`)}</button>
        <button aria-label="Panel menu">${panelMenuIcon}</button>
      </div>
      <div class="binbody">
        <div class="presets">${presets.map(([n, art], i) => html`<button class=${i === 2 ? "on" : ""} aria-label=${n}>${art}</button>`)}</div>
        <div class="sbar">${icon(6, 4, svg`<path d="M0 4H6L3 0Z" fill="currentColor"/>`)}${icon(6, 4, svg`<path d="M0 0H6L3 4Z" fill="currentColor"/>`)}</div>
      </div>
    </aside>`;
  }

  private renderAction(a: Action) {
    const cls = { act: true, on: !!a.on, wide: !!a.wide, gap: !!a.gap, first: a.label === "Photo Bin" };
    return html`<button class=${classMap(cls)}>
      <span class=${classMap({ art: true, small: a.label === "Styles" })}>${a.art}</span><span>${a.label}</span>
      ${a.caret ? html`<svg class="ico dd" width="6" height="4" viewBox="0 0 6 4" aria-hidden="true"><path d="M0 0H6L3 4Z" fill="currentColor" /></svg>` : nothing}
    </button>${a.sep ? html`<span class="dots"></span>` : nothing}`;
  }

  private renderTaskbar() {
    return html`<footer class="taskbar">
      <button class="start" aria-label="Start">${icon(22, 22, svg`<path d="M1 4L9.500 2.800V10.500H1ZM10.500 2.600L21 1V10.500H10.500ZM1 11.500H9.500V19.200L1 18ZM10.500 11.500H21V21L10.500 19.400Z" fill="#fff"/>`)}</button>
      <label class="search">
        ${icon(28, 28, svg`<circle cx="13" cy="14" r="11.500" fill="none" stroke="#fff" stroke-width="3.500"/>`)}
        <input type="text" placeholder="Type here to search" aria-label="Search" />
        ${icon(16, 22, svg`<rect x="5" y="1" width="6" height="13" fill="none" stroke="#a5a5a5" stroke-width="1.500"/><path d="M1.500 10V14Q1.500 17 4.500 17H11.500Q14.500 17 14.500 14V10M8 17V21M4 21H12" fill="none" stroke="#a5a5a5" stroke-width="1.500"/>`)}
      </label>
      <button class="task view-all" aria-label="Task View">${icon(26, 20, svg`<rect x="5.500" y="1.500" width="15" height="17" fill="none" stroke="#fff" stroke-width="1.300"/><path d="M4 4H1.500V16H4M22 4H24.500V16H22" fill="none" stroke="#fff" stroke-width="1.300"/>`)}</button>
      ${tasks.map((t) => html`<button class=${classMap({ task: true, open: !!t.open, multi: !!t.multi, active: !!t.active })} aria-label=${t.name}>${t.art}</button>`)}
      <div class="tray">
        <button aria-label="Show hidden icons">${icon(18, 12, svg`<path d="M1 10L9 2L17 10" fill="none" stroke="#eee" stroke-width="1.500"/>`)}</button>
        <button aria-label="Network">${icon(60, 18, svg`<g fill="none" stroke="#999" stroke-width="1.500"><path d="M23 17Q23 3 38 2.500M27 17Q27 7 38 6.500M31 17Q31 11.500 38 11"/></g><circle cx="36.500" cy="15.500" r="1.800" fill="#eee"/>`)}</button>
        <button aria-label="Touch keyboard">${icon(30, 18, svg`<rect x="0.700" y="1.700" width="28.500" height="15.500" fill="none" stroke="#eee" stroke-width="1.400"/><path d="M4 5.500H26M4 9H26" stroke="#eee" stroke-width="1.500" stroke-dasharray="1.500 2"/><path d="M4 13H7M9 13H21M23 13H26" stroke="#eee" stroke-width="1.500"/>`)}</button>
        <div class="clock"><span>12:21 PM</span><span>11/27/2017</span></div>
        <button class="notes" aria-label="1 notification">${icon(32, 32, svg`<path d="M1 2H21V18H11L7 22V18H1Z" fill="#fff"/><path d="M5 6.500H17M5 10.500H17M5 14.500H13" stroke="#222" stroke-width="1.200"/><circle cx="20.500" cy="21" r="9.500" fill="#3a3a3a" stroke="#8a8a8a"/><text x="20.500" y="26" text-anchor="middle" font-family="Open Sans, sans-serif" font-size="14" fill="#fff">1</text>`)}</button>
        <span class="desk"></span>
      </div>
    </footer>`;
  }

  render() {
    return html`
      ${this.renderTitle()} ${this.renderModes()}
      <div class="body">${this.renderToolbox()} ${this.renderWork()} ${this.renderBin()}</div>
      <div class="actions">
        ${leftActions.map((a) => this.renderAction(a))}
        <span class="spacer"></span>
        ${rightActions.map((a) => this.renderAction(a))}
      </div>
      ${this.renderTaskbar()}
    `;
  }
}
